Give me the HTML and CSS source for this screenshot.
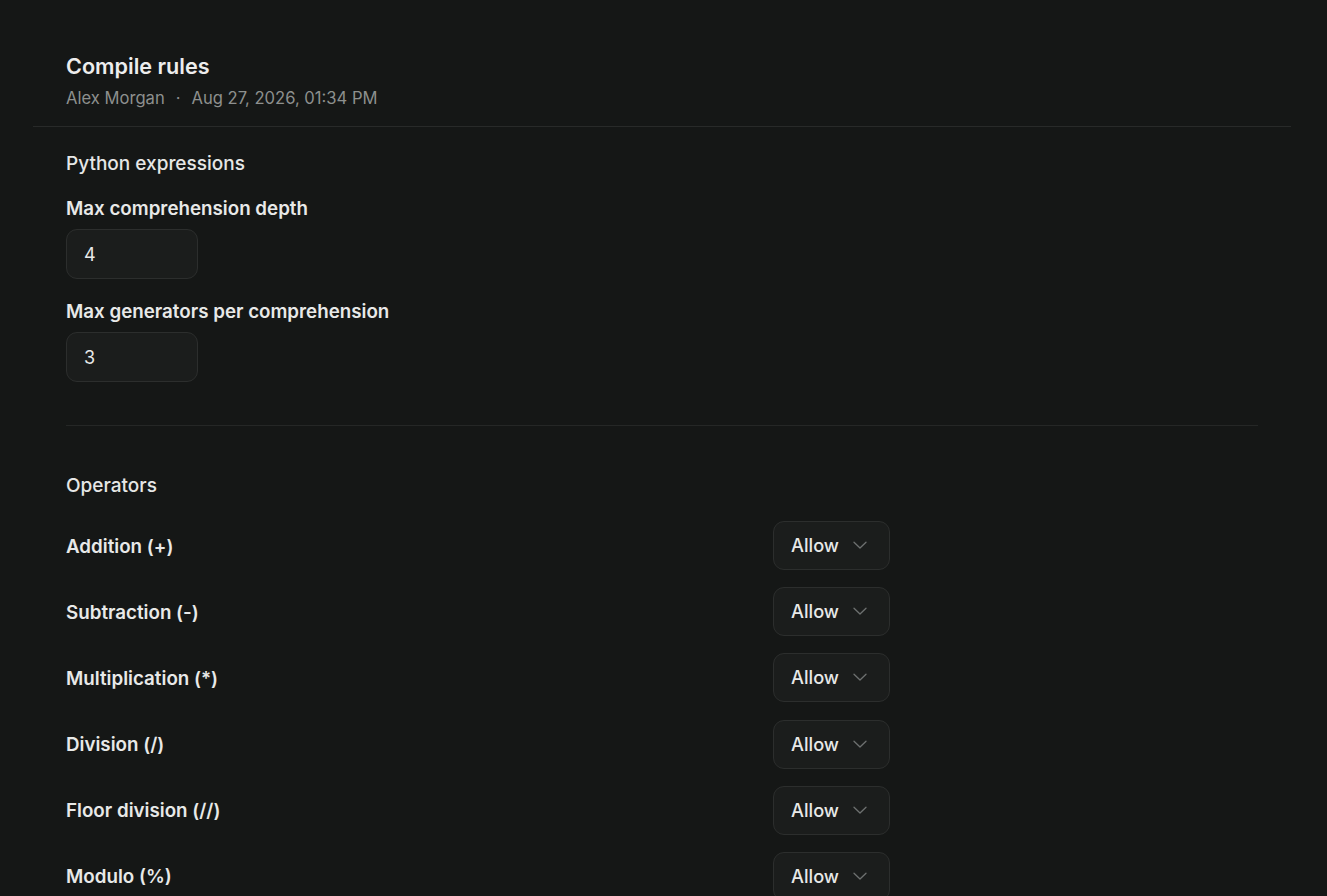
FILE: index.html
```html
<!DOCTYPE html>
<html lang="en">
<head>
    <meta charset="UTF-8">
    <meta name="viewport" content="width=device-width, initial-scale=1.0">
    <title>Compile rules</title>
    <link rel="stylesheet" href="styles.css">
</head>
<body>
    <div class="page">
        <div class="header">
            <h1>Compile rules</h1>
            <div class="meta">
                <span>Alex Morgan</span>
                <span class="dot">·</span>
                <span>Aug 27, 2026, 01:34 PM</span>
            </div>
        </div>

        <div class="content">
            <div class="section">
                <h2>Python expressions</h2>

                <div class="field">
                    <label for="depth">Max comprehension depth</label>
                    <input class="num-input" id="depth" type="text" value="4">
                </div>

                <div class="field">
                    <label for="generators">Max generators per comprehension</label>
                    <input class="num-input" id="generators" type="text" value="3">
                </div>
            </div>

            <hr class="divider">

            <div class="section operators">
                <h2>Operators</h2>

                <div class="op-row">
                    <span class="op-label">Addition (+)</span>
                    <button class="select">Allow <svg width="16" height="16" viewBox="0 0 16 16"><path d="M2 5.2 8 11l6-5.8" fill="none" stroke="currentColor" stroke-width="1.3" stroke-linecap="round" stroke-linejoin="round"/></svg></button>
                </div>
                <div class="op-row">
                    <span class="op-label">Subtraction (-)</span>
                    <button class="select">Allow <svg width="16" height="16" viewBox="0 0 16 16"><path d="M2 5.2 8 11l6-5.8" fill="none" stroke="currentColor" stroke-width="1.3" stroke-linecap="round" stroke-linejoin="round"/></svg></button>
                </div>
                <div class="op-row">
                    <span class="op-label">Multiplication (*)</span>
                    <button class="select">Allow <svg width="16" height="16" viewBox="0 0 16 16"><path d="M2 5.2 8 11l6-5.8" fill="none" stroke="currentColor" stroke-width="1.3" stroke-linecap="round" stroke-linejoin="round"/></svg></button>
                </div>
                <div class="op-row">
                    <span class="op-label">Division (/)</span>
                    <button class="select">Allow <svg width="16" height="16" viewBox="0 0 16 16"><path d="M2 5.2 8 11l6-5.8" fill="none" stroke="currentColor" stroke-width="1.3" stroke-linecap="round" stroke-linejoin="round"/></svg></button>
                </div>
                <div class="op-row">
                    <span class="op-label">Floor division (//)</span>
                    <button class="select">Allow <svg width="16" height="16" viewBox="0 0 16 16"><path d="M2 5.2 8 11l6-5.8" fill="none" stroke="currentColor" stroke-width="1.3" stroke-linecap="round" stroke-linejoin="round"/></svg></button>
                </div>
                <div class="op-row">
                    <span class="op-label">Modulo (%)</span>
                    <button class="select">Allow <svg width="16" height="16" viewBox="0 0 16 16"><path d="M2 5.2 8 11l6-5.8" fill="none" stroke="currentColor" stroke-width="1.3" stroke-linecap="round" stroke-linejoin="round"/></svg></button>
                </div>
            </div>
        </div>
    </div>
</body>
</html>
```

FILE: styles.css
```css
body {
    margin: 0;
    background-color: #151716;
    color: #e8e9e8;
    font-family: Inter, "Noto Sans", sans-serif;
    overflow: hidden;
}
.page {
    padding: 0 36px 0 33px;
}
.header {
    padding: 52px 33px 17px;
    border-bottom: 1px solid #282a29;
}
h1 {
    margin: 0;
    font-size: 21.6px;
    line-height: 28px;
    font-weight: 600;
    color: #ededed;
}
.meta {
    margin-top: 7px;
    font-size: 16.6px;
    line-height: 22px;
    color: #8d908e;
    display: flex;
    gap: 11px;
}
.content {
    padding: 0 33px;
}
h2 {
    margin: 0;
    font-size: 19px;
    line-height: 24px;
    font-weight: 500;
    color: #e6e7e6;
}
.section {
    padding-top: 25px;
}
.field {
    margin-top: 21px;
}
label,
.op-label {
    display: block;
    font-size: 18.75px;
    line-height: 24px;
    font-weight: 600;
    color: #e8e9e8;
}
.op-label {
    padding-top: 2px;
}
.num-input {
    display: block;
    margin-top: 8px;
    width: 132px;
    height: 50px;
    box-sizing: border-box;
    padding: 0 17px;
    background: #1b1d1c;
    border: 1px solid #2c2e2d;
    border-radius: 11px;
    color: #e8e9e8;
    font-family: inherit;
    font-size: 18px;
    outline: none;
}
.divider {
    margin: 43px 0 0;
    border: none;
    border-top: 1px solid #252726;
}
.operators {
    padding-top: 48px;
}
.op-row {
    display: grid;
    grid-template-columns: 707px auto;
    align-items: center;
    margin-top: 17.2px;
}
.operators h2 + .op-row {
    margin-top: 23px;
}
.select {
    width: 117px;
    height: 49px;
    display: flex;
    align-items: center;
    justify-content: space-between;
    padding: 0 21px 1px 17px;
    background: #1b1d1c;
    border: 1px solid #2c2e2d;
    border-radius: 11px;
    color: #e8e9e8;
    font-family: inherit;
    font-size: 18.25px;
    font-weight: 500;
    cursor: pointer;
}
.select svg {
    color: #6e7170;
}
```
